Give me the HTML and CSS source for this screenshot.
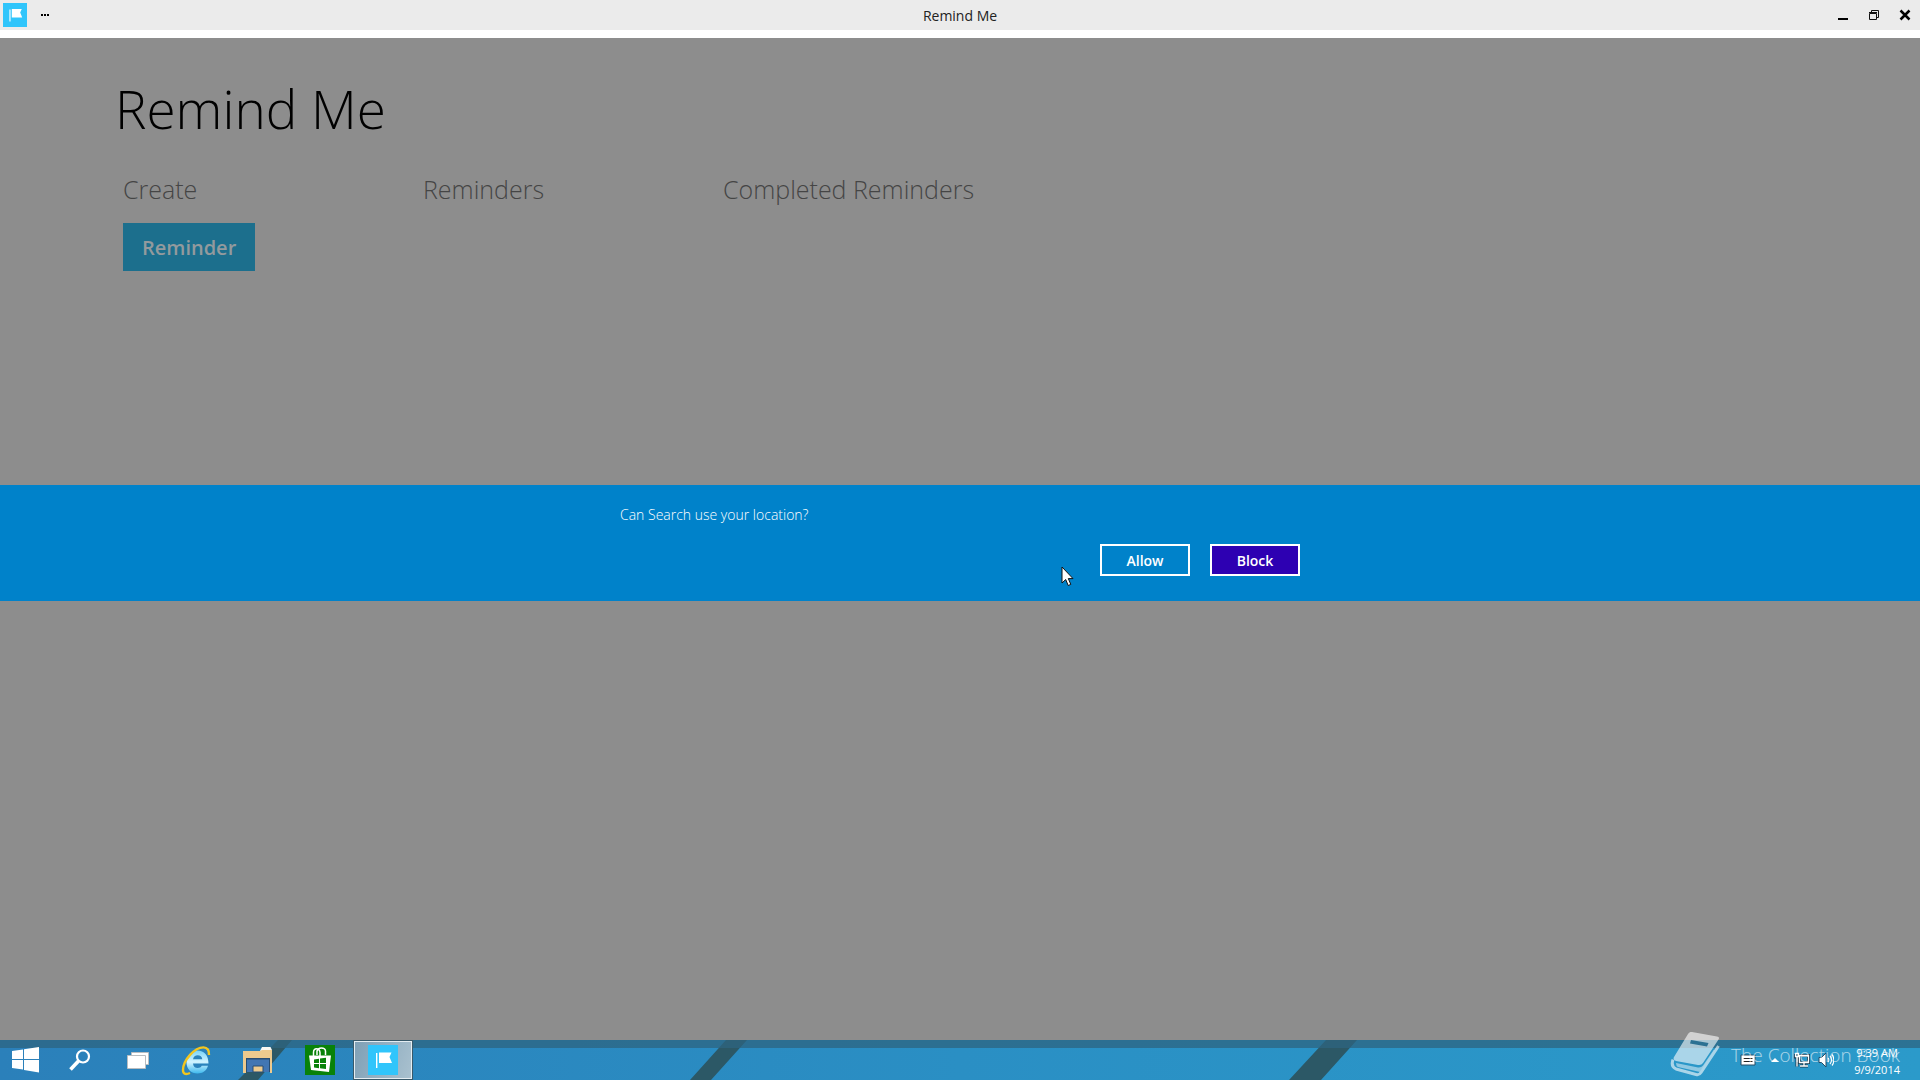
FILE: index.html
```html
<!DOCTYPE html>
<html lang="en">
<head>
<meta charset="utf-8">
<meta name="viewport" content="width=device-width, initial-scale=1">
<title>Remind Me</title>
<link rel="stylesheet" href="styles.css">
</head>
<body>
<header class="titlebar">
  <div class="titlebar-side">
    <svg class="app-icon" viewBox="0 0 30 30" aria-hidden="true"><rect width="30" height="30" fill="#30c5fb"/><path d="M8 8h1.400v15H8zM11 7.500h12.500L21.500 12l2.500 6H11z" fill="#fff"/></svg>
    <button class="more" aria-label="App commands"><svg width="8" height="2" viewBox="0 0 8 2"><path d="M0 0h2v2H0zM3 0h2v2H3zM6 0h2v2H6z"/></svg></button>
  </div>
  <span class="titlebar-name">Remind Me</span>
  <div class="titlebar-side window-controls">
    <button aria-label="Minimize"><svg width="12" height="12" viewBox="0 0 12 12"><path d="M1 9h10v2H1z"/></svg></button>
    <button aria-label="Restore"><svg width="12" height="12" viewBox="0 0 12 12" fill="none" stroke="#111"><path d="M1.500 4.500h7v6h-7zM1 3.500h8M3.500 3V1.500h7v7H9"/></svg></button>
    <button class="close" aria-label="Close"><svg width="12" height="12" viewBox="0 0 12 12" stroke="#000" stroke-width="2.500"><path d="M1.500 1.500l9 9M10.500 1.500l-9 9"/></svg></button>
  </div>
</header>
<main class="app">
  <h1>Remind Me</h1>
  <div class="columns">
    <section>
      <h2>Create</h2>
      <button class="create">Reminder</button>
    </section>
    <section><h2>Reminders</h2></section>
    <section><h2>Completed Reminders</h2></section>
  </div>
</main>
<footer class="taskbar">
  <svg class="wallpaper" viewBox="0 0 1920 40" preserveAspectRatio="none" aria-hidden="true"><path d="M278 0h14l-34 40h-20zM726 0h21l-36 40h-21zM1326 0h31l-36 40h-32z" fill="#2c5866"/><path d="M0 0h1920v8H0z" fill="#2e6480" opacity=".75"/></svg>
  <nav class="launchers" aria-label="Taskbar">
    <button class="start" aria-label="Start"><svg width="27" height="26" viewBox="0 0 27 26"><path d="M0 4l11-1.500V12H0zM12 2.300L27 0v12H12zM0 13h11v9.500L0 21zM12 13h15v12.500L12 23z" fill="#fff"/></svg></button>
    <button class="search" aria-label="Search"><svg width="22" height="22" viewBox="0 0 22 22" fill="none" stroke="#fff"><circle cx="14" cy="7.500" r="6" stroke-width="2.200"/><path d="M9.500 12l-8 8.500" stroke-width="3.600"/></svg></button>
    <button class="views" aria-label="Task View"><svg width="22" height="17" viewBox="0 0 22 17" fill="#fff" stroke="#b9bdc0"><path d="M4.500.5h17v12h-17z"/><path d="M.5 3.500h18v13H.5z"/></svg></button>
    <button class="tile" aria-label="Internet Explorer"><svg width="30" height="31" viewBox="0 0 30 31"><defs><linearGradient id="ie" x2="0" y2="1"><stop stop-color="#79d4f8"/><stop offset=".5" stop-color="#d2f4ff"/><stop offset="1" stop-color="#3eb9ee"/></linearGradient></defs><path d="M27.500 18.500H12c.3 3 2 4.500 4.700 4.500 2 0 3.300-.8 4-2.200h6.300C25.500 26 21.500 28.500 16.500 28.500 10 28.500 5.500 24 5.500 17.500S10 5.500 16.500 5.500c6.700 0 11 5 11 13zM12 14.300h9.300c-.3-2.500-2-4-4.600-4-2.500 0-4.200 1.500-4.700 4z" fill="url(#ie)"/><path d="M28 10c.3-4.500-1.500-7.600-5.500-7.600C13.500 2.400 2 15.500 2 25c0 3.800 2.200 5 7 3" fill="none" stroke="#f2c51f" stroke-width="2.400"/></svg></button>
    <button class="tile" aria-label="File Explorer"><svg width="30" height="26" viewBox="0 0 30 26"><path d="M17 4l2-4h8.500L29 3v6H17z" fill="#f9f8f3"/><path d="M0 4h17l2-1h10v23h-2V12H3v14H0z" fill="#edca8e"/><path d="M3 11h24v14H3z" fill="#284d72"/><path d="M4 12.500h22V25H4z" fill="#4276b3"/><path d="M10 19h10v6H10z" fill="#edca8e" stroke="#284d72"/></svg></button>
    <button class="tile" aria-label="Store"><svg width="30" height="30" viewBox="0 0 30 30"><path d="M0 0h30v30H0z" fill="#088209"/><path d="M4 10.500h22L24 27 6 25z" fill="#fff"/><path d="M8.500 11V7.500c0-5 6-5 6.500 0V11M12 10V6c1-4 8-4 8.500 0v4" fill="none" stroke="#fff" stroke-width="1.500"/><path d="M9 14.500l5-.8V18H9zM15 13.500l6-.7V18h-6zM9 19h5v4.300l-5-.8zM15 19h6v5l-6-.7z" fill="#088209"/></svg></button>
    <button class="tile active" aria-label="Remind Me"><svg width="30" height="30" viewBox="0 0 30 30"><rect width="30" height="30" fill="#30c5fb"/><path d="M8 8h1.400v15H8zM11 7.500h12.500L21.500 12l2.500 6H11z" fill="#fff"/></svg></button>
  </nav>
  <div class="tray">
    <button aria-label="Touch keyboard"><svg width="16" height="12" viewBox="0 0 16 12"><path d="M1 1h14v10H1z" fill="#fff" stroke="#244d66"/><path d="M3.500 4.500h9M3.500 7.500h9" stroke="#222"/></svg></button>
    <button aria-label="Show hidden icons"><svg width="10" height="6" viewBox="0 0 10 6"><path d="M1 5l4-4 4 4z" fill="#fff"/></svg></button>
    <button aria-label="Network"><svg width="16" height="16" viewBox="0 0 16 16" fill="none"><path d="M5.500 3.500h9v7h-9zM10 10.500v3M6 14h8M3 1.500v13M1.500 2v3h3V2" stroke="#173a4f" stroke-width="3"/><path d="M5.500 3.500h9v7h-9zM10 10.500v3M6 14h8M3 5v9.500M1.500 1.500v3h3v-3z" stroke="#fff" stroke-width="1.300"/></svg></button>
    <button class="volume" aria-label="Volume"><svg width="16" height="16" viewBox="0 0 16 16" fill="none"><path d="M1 5.500h2.500L8 1v14l-4.500-4.500H1z" fill="#fff" stroke="#244d66"/><path d="M10 6c1 1 1 3 0 4M12 4c2 2 2 6 0 8M14 2.500c2.500 3 2.500 8 0 11" stroke="#fff" stroke-width="1.200"/></svg></button>
    <time class="clock" datetime="2014-09-09T09:39"><span>9:39 AM</span><span>9/9/2014</span></time>
  </div>
</footer>
<div class="watermark">
  <svg width="50" height="46" viewBox="0 0 50 46" fill="#fff"><path d="M22 0l25 4.500q3 .5 1.500 3L33 31q-1.500 2.500-5 2L6 29q-3.500-1-2-4L18 2q1.500-2.500 4-2zM21 8l-1 3.500 17 3 1.500-3.500z" fill-rule="evenodd"/><path d="M3 27.500q-2.500 7 3 9.500l20 5.500q3 1 5-2L48.500 14" fill="none" stroke="#fff" stroke-width="3"/><path d="M6 31l22 4.500q3 .5 5-2l11-16v3L30 40 8 35q-2-1-2-4z" opacity=".8"/></svg>
  <span>The Collection Book</span>
</div>
<div class="overlay">
  <div class="dialog" role="dialog" aria-modal="true" aria-labelledby="question">
    <div class="dialog-body">
      <p id="question">Can Search use your location?</p>
      <div class="actions">
        <button>Allow</button>
        <button class="default">Block</button>
      </div>
    </div>
  </div>
</div>
<svg class="cursor" width="14" height="21" viewBox="0 0 14 21" aria-hidden="true"><path d="M1 1v16l3.700-3.500 2.500 6 2.600-1.100-2.500-5.800H12z" fill="#fff" stroke="#111"/></svg>
</body>
</html>
```
FILE: styles.css
```css
* { box-sizing: border-box; }

body {
  margin: 0;
  min-height: 100vh;
  display: flex;
  flex-direction: column;
  position: relative;
  background: #8d8d8d;
  font-family: "Open Sans", "Noto Sans", sans-serif;
  font-size: 14px;
}

h1, h2, p { margin: 0; font-weight: 300; }

button {
  margin: 0;
  padding: 0;
  border: 0;
  background: none;
  font: inherit;
  color: inherit;
}

svg { display: block; }

.titlebar {
  display: flex;
  align-items: center;
  height: 38px;
  padding: 0 3px;
  background: #ebebeb;
  border-bottom: 8px solid #fff;
  color: #222;
}

.titlebar-side {
  flex: 1;
  display: flex;
  align-items: center;
}

.app-icon { width: 24px; height: 24px; }
.more { padding: 4px 14px; }
.window-controls { justify-content: flex-end; gap: 19px; }
.close { margin-right: 6px; }

.app { flex: 1; padding: 32px 115px; }

h1 {
  font-size: 53px;
  line-height: 78px;
  color: #000;
}

.columns {
  display: grid;
  grid-template-columns: 300px 300px 1fr;
  padding: 24px 8px;
}

h2 {
  font-size: 25px;
  line-height: 34px;
  color: #454545;
}

.create {
  height: 48px;
  margin-top: 17px;
  padding: 0 19px;
  background: #1c6f8d;
  color: #939a9d;
  font-size: 20px;
  font-weight: 600;
}

.taskbar {
  position: relative;
  display: flex;
  justify-content: space-between;
  height: 40px;
  background: linear-gradient(90deg, #2b80ba, #2a8fc4 50%, #2b9aca);
}

.wallpaper {
  position: absolute;
  inset: 0;
  width: 100%;
  height: 100%;
}

.launchers, .tray {
  position: relative;
  display: flex;
  align-items: center;
}

.launchers button {
  display: flex;
  align-items: center;
  justify-content: center;
  height: 40px;
}

.start { width: 50px; }
.search { width: 60px; }
.views { width: 56px; }
.launchers .tile { width: 60px; margin-right: 2px; }

.launchers .active {
  width: 58px;
  height: 38px;
  margin-left: 2px;
  border: 1px solid #e4edf2;
  outline: 1px solid #38596a;
  background: linear-gradient(110deg, #7fa0b6, #a9c1cf);
}

.tray { gap: 14px; padding-right: 20px; }
.volume { margin-left: -6px; }

.clock {
  display: flex;
  flex-direction: column;
  align-items: center;
  padding: 2px 0 0 6px;
  color: #fff;
  font-size: 11px;
  line-height: 17px;
}

.watermark {
  position: absolute;
  right: 20px;
  bottom: 2px;
  display: flex;
  align-items: center;
  gap: 11px;
  color: #fff;
  font-size: 19px;
  font-weight: 300;
  opacity: .6;
  pointer-events: none;
}

.overlay {
  position: absolute;
  inset: 0;
  display: flex;
  align-items: center;
  padding-top: 6px;
}

.dialog {
  flex: 1;
  padding: 18px 20px 25px;
  background: #0082ca;
  color: #fff;
}

.dialog-body {
  max-width: 680px;
  margin: 0 auto;
}

.dialog p { line-height: 24px; }

.actions {
  display: flex;
  justify-content: flex-end;
  gap: 20px;
  margin-top: 17px;
}

.actions button {
  width: 90px;
  height: 32px;
  border: 2px solid #fff;
  font-weight: 600;
}

.actions .default { background: #2d00b2; }

.cursor {
  position: absolute;
  left: 1061px;
  top: 566px;
}
```
